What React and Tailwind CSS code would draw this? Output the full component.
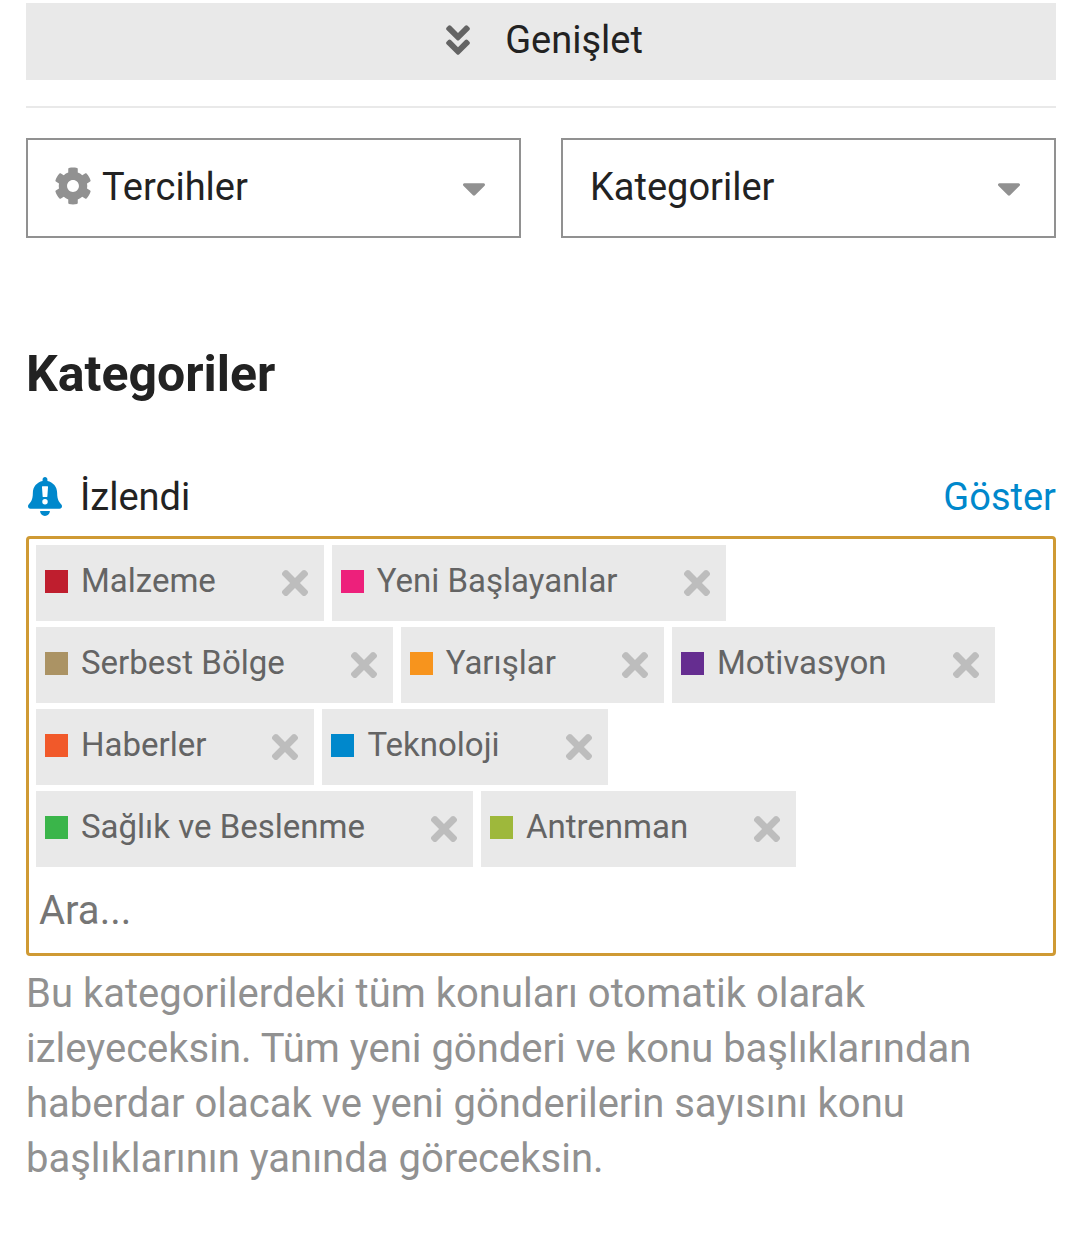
import React from "react";
import { FaAngleDoubleDown, FaCaretDown, FaCog, FaTimes } from "react-icons/fa";

const watchedCategories = [
  { name: "Malzeme", color: "bg-[#bf1e2e]" },
  { name: "Yeni Başlayanlar", color: "bg-[#ed207b]" },
  { name: "Serbest Bölge", color: "bg-[#ab9364]" },
  { name: "Yarışlar", color: "bg-[#f7941d]" },
  { name: "Motivasyon", color: "bg-[#652d90]" },
  { name: "Haberler", color: "bg-[#f1592a]" },
  { name: "Teknoloji", color: "bg-[#0088cc]" },
  { name: "Sağlık ve Beslenme", color: "bg-[#3ab54a]" },
  { name: "Antrenman", color: "bg-[#9eb83b]" },
];

const BellExclamation = () => (
  <svg viewBox="0 0 448 512" className="mb-[2px] h-[39px] w-[34px]" aria-hidden="true">
    <path
      fill="#0088cc"
      d="M224 512c35.32 0 63.97-28.65 63.97-64H160.03c0 35.35 28.65 64 63.97 64zm215.39-149.71c-19.32-20.76-55.47-51.99-55.47-154.29 0-77.7-54.48-139.9-127.94-155.16V32c0-17.67-14.32-32-31.98-32s-31.98 14.33-31.98 32v20.84C118.56 68.1 64.08 130.3 64.08 208c0 102.3-36.15 133.53-55.47 154.29-6 6.45-8.66 14.16-8.61 21.71.11 16.4 12.98 32 32.1 32h383.8c19.12 0 32-15.6 32.1-32 .05-7.55-2.61-15.27-8.61-21.71z"
    />
    <path
      fill="#fff"
      d="M192 120h64c5 0 9 4 8 9l-9 128c0 4-4 7-8 7h-46c-4 0-8-3-8-7l-9-128c-1-5 3-9 8-9z"
    />
    <circle cx="224" cy="324" r="36" fill="#fff" />
  </svg>
);

const Dropdown = ({ label, icon }) => {
  return (
    <div className="relative flex-1">
      {icon}
      <select
        aria-label={label}
        className={
          icon
            ? "h-[100px] w-full appearance-none border-2 border-[#919191] bg-white pb-[2px] pl-[74px] pr-16 text-[38px]"
            : "h-[100px] w-full appearance-none border-2 border-[#919191] bg-white pb-[2px] pl-[27px] pr-16 text-[38px]"
        }
      >
        <option>{label}</option>
      </select>
      <FaCaretDown className="pointer-events-none absolute right-7 top-[31px] size-[38px] text-[#919191]" />
    </div>
  );
};

const App = () => {
  return (
    <div className="bg-white pl-[26px] pr-6 pt-[3px] font-['Roboto',sans-serif] text-[#222222]">
      {/* expand */}
      <button className="flex h-[77px] w-full items-center justify-center gap-7 bg-[#e9e9e9] pb-[2px] text-[38px]">
        <FaAngleDoubleDown className="mb-[2px] size-[38px] text-[#646464]" />
        <span>Genişlet</span>
      </button>
      <hr className="mt-[26px] border-t-2 border-[#e9e9e9]" />

      {/* navigation */}
      <nav className="mt-[30px] flex gap-10">
        <Dropdown
          label="Tercihler"
          icon={
            <FaCog className="pointer-events-none absolute left-7 top-[29px] size-[38px] text-[#919191]" />
          }
        />
        <Dropdown label="Kategoriler" />
      </nav>

      <h1 className="mt-[104px] text-[50px] font-bold leading-[64px]">
        Kategoriler
      </h1>

      {/* watched categories */}
      <div className="mt-[63px] flex items-center justify-between text-[38px] leading-[56px]">
        <label htmlFor="watched" className="flex items-center gap-[18px] pl-[2px]">
          <BellExclamation />
          <span>İzlendi</span>
        </label>
        <a href="#goster" className="text-[#0088cc]">
          Göster
        </a>
      </div>
      <div className="mt-[11px] flex flex-wrap gap-x-2 gap-y-[6px] rounded-[4px] border-3 border-[#cf9a34] px-[7px] pt-[6px]">
        {watchedCategories.map((category) => (
          <div
            key={category.name}
            className="flex h-[76px] items-center bg-[#e9e9e9] pl-[9px] pr-[10px] text-[33px] text-[#646464]"
          >
            <span className={`mb-1 mr-[13px] size-[23px] ${category.color}`} />
            <span className="pb-1">{category.name}</span>
            <button
              aria-label={`${category.name} kaldır`}
              className="ml-[60px] text-[38px] text-[#bdbdbd]"
            >
              <FaTimes />
            </button>
          </div>
        ))}
        <input
          id="watched"
          type="text"
          placeholder="Ara..."
          className="h-[80px] basis-full bg-transparent pb-[6px] pl-[3px] text-[40px] outline-none placeholder:text-[#757575]"
        />
      </div>
      <p className="mt-[10px] text-[40px] leading-[55px] text-[#919191]">
        Bu kategorilerdeki tüm konuları otomatik olarak izleyeceksin. Tüm yeni
        gönderi ve konu başlıklarından haberdar olacak ve yeni gönderilerin
        sayısını konu başlıklarının yanında göreceksin.
      </p>
    </div>
  );
};

export default App;
